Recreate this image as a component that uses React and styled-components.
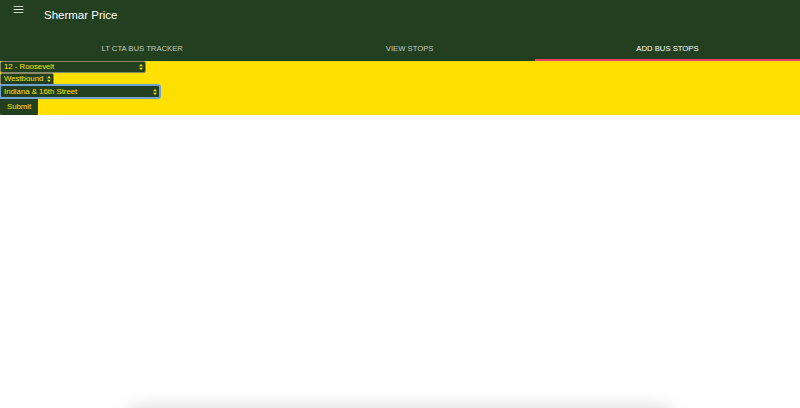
import React from 'react';
import styled, { createGlobalStyle } from 'styled-components';

const GREEN = '#22401f';
const YELLOW = '#ffe000';

const GlobalStyle = createGlobalStyle`
    body {
        margin: 0;
        background: #ffffff;
        font-family: "Liberation Sans", Arial, sans-serif;
        overflow: hidden;
    }
`
const Page = styled.div`
    width: 800px;
    height: 408px;
    display: flex;
    flex-direction: column;
    overflow: hidden;
`
const Header = styled.header`
    background-color: ${GREEN};
    display: flex;
    flex-direction: column;
    flex-shrink: 0;
`
const Toolbar = styled.div`
    height: 36px;
    display: flex;
    align-items: flex-start;
    padding-left: 12px;
`
const MenuButton = styled.button`
    width: 14px;
    height: 14px;
    margin-top: 3px;
    padding: 0;
    border: none;
    background: none;
    display: flex;
    color: #ffffff;
`
const Title = styled.h1`
    margin: 9px 0 0 18px;
    font-size: 11.5px;
    font-weight: 400;
    color: #ffffff;
    line-height: normal;
`
const Tabs = styled.nav`
    height: 25px;
    display: flex;
`
const Tab = styled.div`
    flex: 1 1 auto;
    display: flex;
    align-items: center;
    justify-content: center;
    font-size: 7.7px;
    text-transform: uppercase;
    color: ${p => p.$active ? '#ffffff' : 'rgba(255,255,255,0.72)'};
    border-bottom: 2px solid ${p => p.$active ? '#ee3f6e' : 'transparent'};
    padding-top: 2px;
`
const Form = styled.form`
    background-color: ${YELLOW};
    display: flex;
    flex-direction: column;
    align-items: flex-start;
    flex-shrink: 0;
`
const SelectWrap = styled.div`
    position: relative;
    display: flex;
`
const Select = styled.select`
    appearance: none;
    width: ${p => p.$width}px;
    height: ${p => p.$height || 12}px;
    margin: 0;
    padding: 0 0 0 3px;
    border: 1px solid ${p => p.$focus ? '#6fa3d6' : '#8a8a6a'};
    border-radius: 2px;
    box-shadow: ${p => p.$focus ? '0 0 0 1px #6fa3d6' : 'none'};
    background-color: ${GREEN};
    color: ${YELLOW};
    font-family: "Liberation Sans", Arial, sans-serif;
    font-size: 7.8px;
    line-height: 1;
    outline: none;
`
const Arrow = styled.svg`
    position: absolute;
    right: 3px;
    top: 50%;
    transform: translateY(-50%);
    pointer-events: none;
`
const Submit = styled.button`
    height: 17px;
    padding: 0 7px;
    border: none;
    border-radius: 1px;
    background-color: ${GREEN};
    color: ${YELLOW};
    font-family: "Liberation Sans", Arial, sans-serif;
    font-size: 7.8px;
`
const Card = styled.div`
    width: 540px;
    height: 60px;
    margin: 295px auto 0;
    background: #ffffff;
    box-shadow: 0 0 20px rgba(0, 0, 0, 0.2);
    flex-shrink: 0;
`

const MenuIcon = () => (
    <svg width="13" height="13" viewBox="0 0 24 24" fill="currentColor">
        <path d="M3 18h18v-1.6H3V18zm0-5.2h18v-1.6H3v1.6zM3 6v1.6h18V6H3z" />
    </svg>
)

const Dropdown = ({ width, height, focus, children }) => (
    <SelectWrap>
        <Select $width={width} $height={height} $focus={focus}>{children}</Select>
        <Arrow width="4" height="7" viewBox="0 0 4 7" fill={YELLOW}>
            <path d="M0 2.8L2 0.6 4 2.8z M0 4.2L2 6.4 4 4.2z" />
        </Arrow>
    </SelectWrap>
)

const App = () => {

    return (
        <Page>
            <GlobalStyle />
            <Header>
                <Toolbar>
                    <MenuButton aria-label='menu'><MenuIcon /></MenuButton>
                    <Title>Shermar Price</Title>
                </Toolbar>
                <Tabs>
                    <Tab>LT CTA Bus Tracker</Tab>
                    <Tab>View Stops</Tab>
                    <Tab $active>Add Bus Stops</Tab>
                </Tabs>
            </Header>
            <Form onSubmit={e => e.preventDefault()}>
                <Dropdown width={146}>
                    <option>12 - Roosevelt</option>
                </Dropdown>
                <Dropdown width={54}>
                    <option>Westbound</option>
                </Dropdown>
                <Dropdown width={160} height={13} focus>
                    <option>Indiana &amp; 16th Street</option>
                </Dropdown>
                <Submit type='submit'>Submit</Submit>
            </Form>
            <Card />
        </Page>
    )
}

export default App;
